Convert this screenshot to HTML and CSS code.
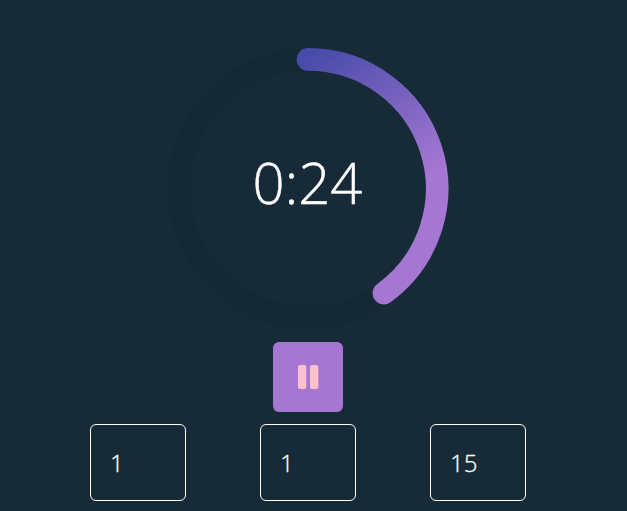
FILE: index.html
```html
<!DOCTYPE html>
<html lang="en">
<head>
<meta charset="utf-8">
<title>Timer</title>
<link rel="stylesheet" href="styles.css">
</head>
<body>
<main class="timer">
  <div class="dial">
    <svg class="ring" viewBox="0 0 280 280" aria-hidden="true">
      <defs>
        <linearGradient id="progress" gradientUnits="userSpaceOnUse" x1="128" y1="12" x2="224" y2="152">
          <stop offset="0" stop-color="#464aa9"/>
          <stop offset="1" stop-color="#a577d3"/>
        </linearGradient>
      </defs>
      <circle class="track" cx="140" cy="140.6" r="129.2"/>
      <path class="progress" d="M140 11.4A129.2 129.2 0 0 1 215.9 245.1" stroke="url(#progress)"/>
    </svg>
    <div class="time">0:24</div>
  </div>
  <button class="pause" aria-label="Pause">
    <svg class="pause-icon" viewBox="0 0 22 24"><rect x="1" width="8.3" height="24" rx="2"/><rect x="13" width="8.3" height="24" rx="2"/></svg>
  </button>
  <div class="fields">
    <input class="field" value="1" aria-label="Hours">
    <input class="field" value="1" aria-label="Minutes">
    <input class="field" value="15" aria-label="Seconds">
  </div>
</main>
</body>
</html>
```
FILE: styles.css
```css
body {
  margin: 0;
  height: 511px;
  overflow: hidden;
  background: #162b37;
  color: #fff;
  font-family: "Open Sans", sans-serif;
  font-weight: 300;
}
.timer {
  width: 616px;
  padding-top: 48px;
  display: flex;
  flex-direction: column;
  align-items: center;
}
.dial {
  display: grid;
  width: 280px;
  height: 280px;
}
.ring, .time { grid-area: 1 / 1; }
.ring { width: 280px; height: 280px; overflow: visible; }
.track, .progress { fill: none; stroke-width: 22.6; }
.track { stroke: #142934; }
.progress { stroke-linecap: round; }
.time {
  padding: 94px 1px 0 0;
  font-size: 56.3px;
  line-height: 80px;
  text-align: center;
  -webkit-text-stroke: 0.4px #fff;
}
.pause {
  display: grid;
  place-items: center;
  width: 70px;
  height: 70px;
  margin: 14px 0 12px;
  padding: 0;
  border: 0;
  border-radius: 6px;
  background: #a577d3;
}
.pause-icon { width: 22px; height: 24px; fill: #ffc0cb; }
.fields { display: flex; gap: 74px; }
.field {
  box-sizing: border-box;
  width: 96px;
  height: 77px;
  padding: 0 19px;
  border: 1px solid #fff;
  border-radius: 6px;
  background: transparent;
  color: #fff;
  font: 300 24px "Open Sans", sans-serif;
  -webkit-text-stroke: 0.3px #fff;
}
```
